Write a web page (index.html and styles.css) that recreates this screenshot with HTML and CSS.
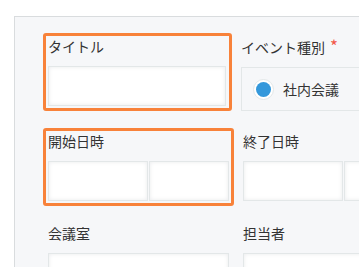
FILE: index.html
```html
<!DOCTYPE html>
<html>
  <head>
    <meta charset="utf-8">
    <title>フォーム設定</title>
    <link rel="stylesheet" href="styles.css">
  </head>
  <body>
    <div class="page">
      <div class="panel">

        <div class="row row-first">
          <div class="field picked">
            <div class="label">タイトル</div>
            <div class="input w-title"></div>
          </div>
          <div class="field">
            <div class="label">イベント種別<span class="required">*</span></div>
            <div class="radio-box">
              <span class="radio"><span class="radio-dot"></span></span>
              <span class="radio-text">社内会議</span>
            </div>
          </div>
        </div>

        <div class="row row-second">
          <div class="field picked">
            <div class="label">開始日時</div>
            <div class="inputs">
              <div class="input w-date"></div>
              <div class="input w-time"></div>
            </div>
          </div>
          <div class="field">
            <div class="label">終了日時</div>
            <div class="inputs">
              <div class="input w-date"></div>
              <div class="input w-time"></div>
            </div>
          </div>
        </div>

        <div class="row">
          <div class="field">
            <div class="label">会議室</div>
            <div class="input w-room"></div>
          </div>
          <div class="field">
            <div class="label">担当者</div>
            <div class="input w-user"></div>
          </div>
        </div>

      </div>
    </div>
  </body>
</html>
```

FILE: styles.css
```css
html, body {
  margin: 0;
  overflow: hidden;
  background: #fff;
}
.page {
  padding: 16px 0 0 14px;
  font-family: "Noto Sans CJK JP", "Noto Sans", sans-serif;
  font-size: 14px;
  color: #333;
}
.panel {
  width: 400px;
  height: 300px;
  background: #f6f7f9;
  border: 1px solid #d9dcde;
  padding: 16px 0 0 28px;
}
.row {
  display: flex;
  align-items: flex-start;
}
.row-first {
  margin-bottom: 12px;
}
.row-second {
  margin-bottom: 14px;
}
.field {
  border: 3px solid transparent;
  border-radius: 3px;
  padding: 2px;
  margin-right: 4px;
  flex: none;
}
.field.picked {
  border-color: #f8823a;
}
.label {
  height: 28px;
  line-height: 16px;
  white-space: nowrap;
}
.required {
  color: #f2574a;
  font-size: 17px;
  margin-left: 5px;
}
.input {
  box-sizing: border-box;
  height: 40px;
  background: #fff;
  border: 1px solid #e3e7e8;
  box-shadow: inset 0 0 4px #e9ebec;
}
.inputs {
  display: flex;
  gap: 1px;
}
.w-title {
  width: 178px;
  margin-right: 1px;
}
.w-date {
  width: 100px;
}
.w-time {
  width: 80px;
}
.w-room {
  width: 181px;
}
.w-user {
  width: 200px;
}
.radio-box {
  box-sizing: border-box;
  width: 200px;
  height: 44px;
  margin-top: 1px;
  border: 1px solid #e3e7e8;
  padding-left: 11px;
  display: flex;
  align-items: center;
}
.radio {
  box-sizing: border-box;
  width: 21px;
  height: 21px;
  border: 1px solid #e3e7e8;
  border-radius: 50%;
  background: #fff;
  display: flex;
  align-items: center;
  justify-content: center;
}
.radio-dot {
  width: 15px;
  height: 15px;
  border-radius: 50%;
  background: #3498db;
}
.radio-text {
  margin-left: 9px;
}
```
